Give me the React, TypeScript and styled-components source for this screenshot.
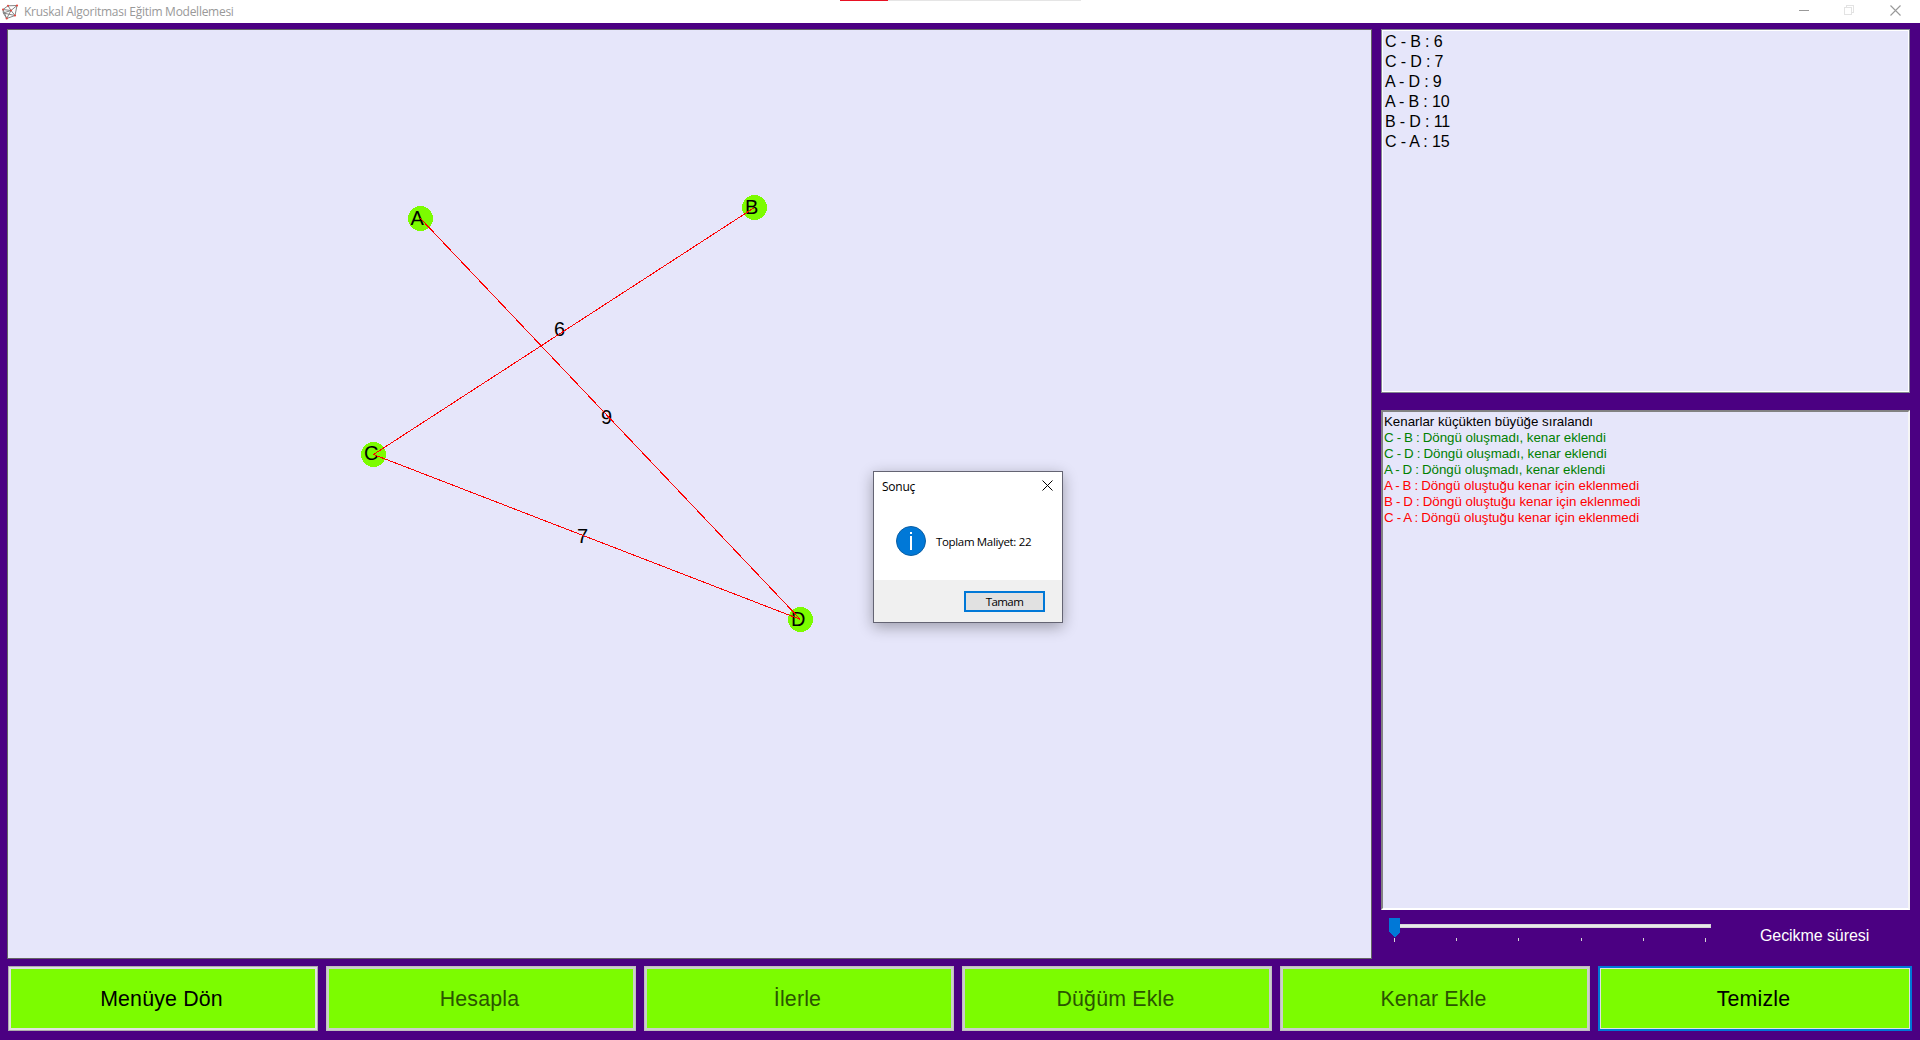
import React from "react";
import styled, { createGlobalStyle } from "styled-components";

const Global = createGlobalStyle`
  * { box-sizing: border-box; }
  body { margin: 0; overflow: hidden; background: #4b0082; }
`;

const sans = `"Liberation Sans", Arial, sans-serif`;
const ui = `"Open Sans", "Noto Sans", sans-serif`;

const Window = styled.div`
  display: flex;
  flex-direction: column;
  width: 1920px;
  height: 1040px;
  background: #4b0082;
  font-family: ${sans};
  color: #000;
`;

const TitleBar = styled.header`
  position: relative;
  display: flex;
  align-items: center;
  height: 23px;
  padding: 0 19px 0 2px;
  background: #fff;
  font-family: ${ui};
`;

const Title = styled.h1`
  flex: 1;
  margin: 0 0 0 5px;
  font-size: 12px;
  line-height: 21px;
  font-weight: 400;
  letter-spacing: -0.27px;
  color: #999;
`;

const WindowControls = styled.div`
  display: flex;
  gap: 35px;
  height: 21px;
  margin-bottom: 2px;
  align-items: center;
`;

const Loading = styled.div`
  position: absolute;
  top: 0;
  left: 840px;
  width: 241px;
  height: 1px;
  background: linear-gradient(to right, #e81123 48px, #e5e5e5 48px);
`;

const Main = styled.main`
  display: flex;
  gap: 9px;
  height: 936px;
  padding: 6px 10px 0 7px;
`;

const Canvas = styled.section`
  width: 1365px;
  height: 930px;
  border: 1px solid #646464;
  background: #e6e6fa;
`;

const Side = styled.aside`
  display: flex;
  flex-direction: column;
  width: 529px;
`;

const EdgeList = styled.ul`
  height: 364px;
  margin: 0 0 17px;
  padding: 1px 3px;
  list-style: none;
  border: 1px solid #828790;
  box-shadow: inset 0 0 0 1px #fff;
  background: #e6e6fa;
`;

const EdgeRow = styled.li`
  height: 20px;
  padding-top: 2px;
  font-size: 16px;
  line-height: 18px;
  letter-spacing: -0.13px;
`;

const Log = styled.div`
  height: 500px;
  padding: 2px 1px;
  border: 2px solid;
  border-color: #828282 #f5f5f5 #fff #828282;
  background: #e6e6fa;
`;

const LogLine = styled.p<{ $color: string }>`
  margin: 0;
  font-size: 13.33px;
  line-height: 16px;
  letter-spacing: -0.02px;
  white-space: pre;
  color: ${(p) => p.$color};
`;

const EdgeName = styled.span`
  letter-spacing: -0.35px;
`;

const SliderRow = styled.div`
  display: flex;
  align-items: flex-start;
  padding: 8px 0 0 8px;
`;

const SliderLabel = styled.label`
  margin: 9px 0 0 49px;
  font-size: 16px;
  line-height: 18px;
  letter-spacing: -0.08px;
  color: #fff;
`;

const Actions = styled.footer`
  display: flex;
  gap: 8px;
  padding: 7px 8px 9px 8px;
`;

const Action = styled.button<{ $focus?: boolean }>`
  width: ${(p) => (p.$focus ? 314 : 310)}px;
  height: 65px;
  padding: 1px 3px 0 0;
  border: ${(p) => (p.$focus ? "2px solid #0078d7" : "1px solid #adadad")};
  box-shadow: inset 0 0 0 ${(p) => (p.$focus ? 1 : 2)}px #e1e1e1;
  background: #7cfc00;
  font-family: ${sans};
  font-size: 21.33px;
  letter-spacing: 0.18px;
  color: #000;
  &:disabled {
    border-color: #bfbfbf;
    box-shadow: inset 0 0 0 2px #ccc;
    color: #2a5500;
  }
`;

const Dialog = styled.div`
  position: absolute;
  left: 873px;
  top: 471px;
  display: flex;
  flex-direction: column;
  width: 190px;
  height: 152px;
  border: 1px solid #646473;
  background: #fff;
  box-shadow: 0 4px 14px rgba(0, 0, 0, 0.32);
  font-family: ${ui};
  font-size: 12px;
`;

const DialogHeader = styled.div`
  display: flex;
  justify-content: space-between;
  height: 30px;
  padding: 5px 9px 0 8px;
  line-height: 20px;
  letter-spacing: -0.25px;
`;

const CloseIcon = styled.svg`
  margin-top: 3px;
`;

const DialogBody = styled.div`
  display: flex;
  gap: 10px;
  flex: 1;
  padding: 24px 0 0 22px;
`;

const Message = styled.p`
  margin: 6px 0 0;
  font-size: 11.5px;
  line-height: 20px;
  letter-spacing: -0.34px;
  white-space: nowrap;
`;

const DialogFooter = styled.div`
  display: flex;
  justify-content: flex-end;
  height: 42px;
  padding: 11px 17px 0;
  background: #f0f0f0;
`;

const OkButton = styled.button`
  width: 81px;
  height: 21px;
  padding: 0;
  border: 2px solid #0078d7;
  background: #e1e1e1;
  font-family: ${ui};
  font-size: 11.5px;
  line-height: 17px;
  letter-spacing: -0.6px;
  color: #000;
`;

const edges = [
  [373, 454, 754, 207],
  [373, 454, 800, 619],
  [420, 218, 800, 619],
];

const nodes = [
  { id: "A", x: 420.5, y: 218.5, tx: 410.5, ty: 225 },
  { id: "B", x: 754.5, y: 207.5, tx: 745, ty: 214 },
  { id: "C", x: 373.5, y: 454.5, tx: 364, ty: 460 },
  { id: "D", x: 800.5, y: 619.5, tx: 791, ty: 626 },
];

const weights = [
  { v: "6", x: 554, y: 336 },
  { v: "9", x: 601, y: 424 },
  { v: "7", x: 577, y: 543 },
];

const Graph = () => (
  <svg width="1363" height="928" viewBox="8 30 1363 928" display="block">
    {nodes.map((n) => (
      <circle key={n.id} cx={n.x} cy={n.y} r="12.5" fill="#7cfc00" shapeRendering="crispEdges" />
    ))}
    <g fontFamily="Liberation Sans, Arial, sans-serif" fontSize="20" fill="#000">
      {nodes.map((n) => (
        <text key={n.id} x={n.tx} y={n.ty}>{n.id}</text>
      ))}
      {weights.map((w) => (
        <text key={w.v} x={w.x} y={w.y}>{w.v}</text>
      ))}
    </g>
    {edges.map(([x1, y1, x2, y2]) => (
      <line key={`${x1}-${x2}-${y2}`} x1={x1 + 0.5} y1={y1 + 0.5} x2={x2 + 0.5} y2={y2 + 0.5} stroke="#f00" shapeRendering="crispEdges" />
    ))}
  </svg>
);

const AppIcon = () => (
  <svg width="17" height="16" viewBox="0 0 17 16" fill="none">
    <path d="M1 5.5 6 1.800 15 1.500 13 11.500 4.700 14.500 1.300 9zM1 5.500l8 1L15 1.500M9 6.500l-4.300 8M9 6.500l4 5M6 1.800l3 4.700M1.300 9 9 6.500M1 5.500l3.700 9M1.300 9l11.700 2.500" stroke="#858585" strokeWidth="1" />
    <g fill="#e8483f">
      <circle cx="1" cy="5.500" r="1" />
      <circle cx="6" cy="1.800" r="1" />
      <circle cx="15" cy="1.500" r="1.100" />
      <circle cx="9" cy="6.500" r="1" />
      <circle cx="13" cy="11.500" r="1.100" />
      <circle cx="4.700" cy="14.500" r="1.100" />
    </g>
  </svg>
);

const Slider = () => (
  <svg width="322" height="25" viewBox="0 0 322 25" shapeRendering="crispEdges">
    <rect x="5" y="6" width="317" height="4" fill="#d6d6d6" />
    <rect x="6" y="7" width="315" height="2" fill="#e7eaea" />
    <path d="M0 0h11v14l-5.500 5.500L0 14z" fill="#0078d7" />
    {[5, 67, 129, 192, 254, 316].map((x, i) => (
      <rect key={x} x={x} y="20" width="1" height={i === 0 || i === 5 ? 4 : 3} fill="#d6d6d6" />
    ))}
  </svg>
);

const sorted = ["C - B : 6", "C - D : 7", "A - D : 9", "A - B : 10", "B - D : 11", "C - A : 15"];

const added = "Döngü oluşmadı, kenar eklendi";
const rejected = "Döngü oluştuğu kenar için eklenmedi";

const log = [
  { edge: "", text: "Kenarlar küçükten büyüğe sıralandı", color: "#000" },
  { edge: "C - B : ", text: added, color: "#008000" },
  { edge: "C - D : ", text: added, color: "#008000" },
  { edge: "A - D : ", text: added, color: "#008000" },
  { edge: "A - B : ", text: rejected, color: "#f00" },
  { edge: "B - D : ", text: rejected, color: "#f00" },
  { edge: "C - A : ", text: rejected, color: "#f00" },
];

export default function App() {
  return (
    <Window lang="tr">
      <Global />
      <TitleBar>
        <AppIcon />
        <Title>Kruskal Algoritması Eğitim Modellemesi</Title>
        <WindowControls>
          <svg width="10" height="11" shapeRendering="crispEdges"><path d="M0 5.500h10" stroke="#999" /></svg>
          <svg width="11" height="11" fill="none" stroke="#e3e3e3" shapeRendering="crispEdges">
            <path d="M.5 2.500h7v7h-7zM2.500 2.500v-2h7v7h-2" />
          </svg>
          <svg width="11" height="11"><path d="M.5.5l10 10M10.500.5l-10 10" stroke="#999" strokeWidth="1.100" /></svg>
        </WindowControls>
        <Loading />
      </TitleBar>
      <Main>
        <Canvas><Graph /></Canvas>
        <Side>
          <EdgeList>{sorted.map((e) => <EdgeRow key={e}>{e}</EdgeRow>)}</EdgeList>
          <Log>
            {log.map((l) => (
              <LogLine key={l.edge + l.text} $color={l.color}>
                {l.edge && <EdgeName>{l.edge}</EdgeName>}
                {l.text}
              </LogLine>
            ))}
          </Log>
          <SliderRow>
            <Slider />
            <SliderLabel>Gecikme süresi</SliderLabel>
          </SliderRow>
        </Side>
      </Main>
      <Actions>
        <Action>Menüye Dön</Action>
        <Action disabled>Hesapla</Action>
        <Action disabled>İlerle</Action>
        <Action disabled>Düğüm Ekle</Action>
        <Action disabled>Kenar Ekle</Action>
        <Action $focus>Temizle</Action>
      </Actions>
      <Dialog role="dialog">
        <DialogHeader>
          <span>Sonuç</span>
          <CloseIcon width="11" height="11"><path d="M.5.5l10 10M10.500.5l-10 10" stroke="#000" /></CloseIcon>
        </DialogHeader>
        <DialogBody>
          <svg width="30" height="30">
            <circle cx="15" cy="15" r="14.500" fill="#0078d7" stroke="#0b5ea3" />
            <path d="M14 6h2v2h-2zM14 10h2v14h-2z" fill="#fff" />
          </svg>
          <Message>Toplam Maliyet: 22</Message>
        </DialogBody>
        <DialogFooter><OkButton>Tamam</OkButton></DialogFooter>
      </Dialog>
    </Window>
  );
}
